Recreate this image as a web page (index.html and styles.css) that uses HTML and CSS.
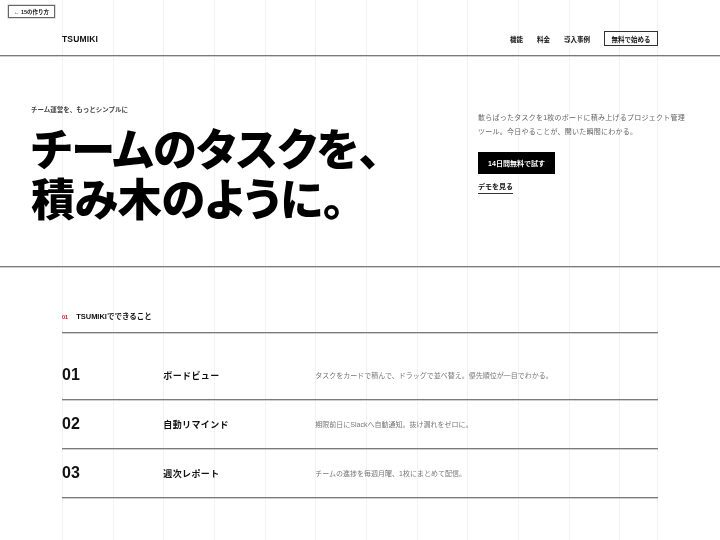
FILE: index.html
```html
<!DOCTYPE html>
<html lang="ja">
<head>
<meta charset="utf-8">
<title>TSUMIKI</title>
<link rel="stylesheet" href="styles.css">
</head>
<body>
<div class="grid-overlay" aria-hidden="true">
  <span></span><span></span><span></span><span></span><span></span><span></span>
  <span></span><span></span><span></span><span></span><span></span><span></span>
</div>

<a class="back-link" href="#">← 15の作り方</a>

<header class="site-header">
  <div class="container header-inner">
    <div class="logo">TSUMIKI</div>
    <nav class="nav">
      <a href="#">機能</a>
      <a href="#">料金</a>
      <a href="#">導入事例</a>
      <a href="#" class="nav-cta">無料で始める</a>
    </nav>
  </div>
</header>

<section class="hero">
  <div class="hero-left">
    <p class="eyebrow">チーム運営を、もっとシンプルに</p>
    <h1 class="hero-title">チームのタスクを、<br>積み木のように。</h1>
  </div>
  <div class="hero-right">
    <p class="lead">散らばったタスクを1枚のボードに積み上げるプロジェクト管理ツール。今日やることが、開いた瞬間にわかる。</p>
    <a href="#" class="btn-primary">14日間無料で試す</a>
    <a href="#" class="link-demo">デモを見る</a>
  </div>
</section>

<section class="features container">
  <div class="section-head">
    <span class="section-num">01</span>
    <h2 class="section-title">TSUMIKIでできること</h2>
  </div>
  <ul class="feature-list">
    <li class="feature-row">
      <span class="f-num">01</span>
      <span class="f-name">ボードビュー</span>
      <span class="f-desc">タスクをカードで積んで、ドラッグで並べ替え。優先順位が一目でわかる。</span>
    </li>
    <li class="feature-row">
      <span class="f-num">02</span>
      <span class="f-name">自動リマインド</span>
      <span class="f-desc">期限前日にSlackへ自動通知。抜け漏れをゼロに。</span>
    </li>
    <li class="feature-row">
      <span class="f-num">03</span>
      <span class="f-name">週次レポート</span>
      <span class="f-desc">チームの進捗を毎週月曜、1枚にまとめて配信。</span>
    </li>
  </ul>
</section>
</body>
</html>
```

FILE: styles.css
```css
* { box-sizing: border-box; }

html, body {
  margin: 0;
  padding: 0;
  background: #fff;
}

body {
  font-family: "Liberation Sans", "Noto Sans CJK JP", sans-serif;
  color: #111;
  position: relative;
  min-height: 540px;
}

a { color: inherit; text-decoration: none; }

.grid-overlay {
  position: fixed;
  top: 0;
  bottom: 0;
  left: 62px;
  right: 62px;
  display: grid;
  grid-template-columns: repeat(12, 1fr);
  column-gap: 12px;
  pointer-events: none;
  z-index: 0;
}

.grid-overlay span {
  border-left: 1px solid #f2f2f2;
}

.grid-overlay span:last-child {
  border-right: 1px solid #f2f2f2;
}

.back-link {
  position: fixed;
  top: 5px;
  left: 8px;
  width: 47px;
  height: 13px;
  border: 1px solid #666;
  background: #fff;
  font-size: 5.5px;
  font-weight: 700;
  color: #222;
  display: flex;
  align-items: center;
  justify-content: center;
  z-index: 5;
  box-shadow: 0 0 0 0.5px #bbb;
}

.container {
  padding: 0 62px;
}

.site-header,
.hero,
.features {
  position: relative;
  z-index: 1;
}

.site-header {
  padding-top: 31px;
  padding-bottom: 9px;
  border-bottom: 1px solid #7a7a7a;
  box-shadow: 0 1px 0 #cfcfcf;
}

.header-inner {
  display: flex;
  align-items: center;
  justify-content: space-between;
  height: 15px;
}

.logo {
  font-size: 8.5px;
  font-weight: 700;
  letter-spacing: 0.02em;
}

.nav {
  display: flex;
  align-items: center;
  gap: 14px;
  font-size: 6.5px;
  font-weight: 700;
}

.nav-cta {
  height: 15px;
  width: 54px;
  border: 1px solid #333;
  display: flex;
  align-items: center;
  justify-content: center;
}

.hero {
  display: flex;
  justify-content: space-between;
  padding: 48px 30px 0 31px;
  height: 210px;
  border-bottom: 1px solid #7a7a7a;
  box-shadow: 0 1px 0 #cfcfcf;
  margin-top: 1px;
}

.eyebrow {
  margin: 0;
  font-size: 6.5px;
  line-height: 10px;
  color: #444;
  font-weight: 700;
}

.hero-title {
  margin: 7px 0 0;
  font-family: "Noto Sans CJK JP", sans-serif;
  font-size: 44px;
  line-height: 50px;
  font-weight: 900;
  font-feature-settings: "palt";
  letter-spacing: -0.005em;
  color: #000;
}

.hero-right {
  width: 212px;
  display: flex;
  flex-direction: column;
  align-items: flex-start;
  padding-top: 6px;
}

.lead {
  margin: 0;
  font-size: 7px;
  line-height: 14px;
  letter-spacing: 0.035em;
  color: #666;
}

.btn-primary {
  margin-top: 13px;
  height: 22px;
  width: 77px;
  background: #000;
  color: #fff;
  font-size: 7px;
  font-weight: 700;
  display: flex;
  align-items: center;
  justify-content: center;
}

.link-demo {
  margin-top: 8px;
  font-size: 7px;
  font-weight: 700;
  line-height: 10px;
  padding-bottom: 1px;
  border-bottom: 1.5px solid #333;
}

.features {
  padding-top: 45px;
}

.section-head {
  display: flex;
  align-items: center;
  gap: 8px;
  padding-bottom: 10px;
  border-bottom: 1px solid #7a7a7a;
  box-shadow: 0 1px 0 #cfcfcf;
}

.section-num {
  font-size: 5.5px;
  font-weight: 700;
  color: #d0021b;
  line-height: 10px;
}

.section-title {
  margin: 0;
  font-size: 7.5px;
  line-height: 10px;
  font-weight: 700;
}

.feature-list {
  list-style: none;
  margin: 18px 0 0;
  padding: 0;
}

.feature-row {
  display: grid;
  grid-template-columns: repeat(12, 1fr);
  column-gap: 12px;
  align-items: center;
  height: 49px;
  border-bottom: 1px solid #7a7a7a;
  box-shadow: 0 1px 0 #cfcfcf;
}

.f-num {
  grid-column: 1 / span 2;
  font-size: 16px;
  font-weight: 700;
}

.f-name {
  grid-column: 3 / span 3;
  font-size: 9px;
  font-weight: 700;
  letter-spacing: 0.04em;
}

.f-desc {
  grid-column: 6 / span 7;
  font-size: 7px;
  color: #777;
}
```
